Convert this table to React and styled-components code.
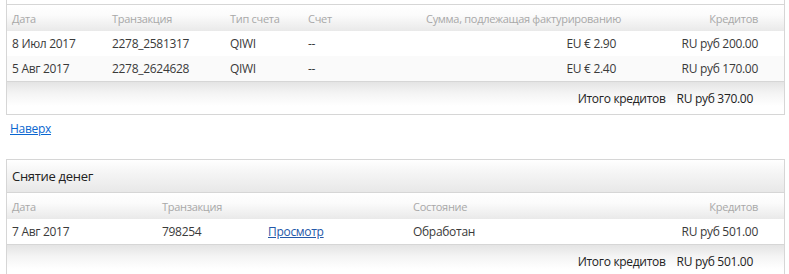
import styled, { createGlobalStyle } from 'styled-components';

const Global = createGlobalStyle`
  body {
    margin: 0;
    background: #fff;
    font-family: "Open Sans", "Noto Sans", sans-serif;
    color: #333;
    letter-spacing: -0.3px;
  }
`;

const Page = styled.div`
  padding: 0 4px 0 6px;
  display: flex;
  flex-direction: column;
`;

const Panel = styled.section`
  border: 1px solid #d6d6d6;
  border-top: ${p => (p.cut ? 'none' : '1px solid #d6d6d6')};
  background: #fff;
`;

const Cap = styled.div`
  height: 4px;
  border-bottom: 1px solid #d6d6d6;
`;

const Title = styled.div`
  height: 32px;
  display: flex;
  align-items: center;
  padding: 0 5px;
  font-size: 13px;
  color: #222;
  border-bottom: 1px solid #d6d6d6;
  background: linear-gradient(#fff 0%, #f6f6f6 35%, #e8e8e8 100%);
`;

const Grid = styled.div`
  display: grid;
  grid-template-columns: ${p => p.cols};
  align-items: center;
  height: ${p => p.h || 25}px;
`;

const HeadRow = styled(Grid)`
  font-size: 11px;
  color: #a8a8a8;
  background: linear-gradient(#fff 0%, #fbfbfb 40%, #e9e9e9 100%);
`;

const Row = styled(Grid)`
  font-size: 12px;
  color: #3a3a3a;
  background: ${p => (p.alt ? '#fafafa' : '#fff')};
  &:last-of-type {
    border-bottom: 1px solid #d6d6d6;
  }
`;

const Cell = styled.div`
  padding: 0 5px;
  white-space: nowrap;
  text-align: ${p => (p.right ? 'right' : 'left')};
  &:last-child {
    padding-right: 26px;
  }
`;

const Body = styled.div``;

const Foot = styled.div`
  height: 32px;
  display: flex;
  justify-content: flex-end;
  align-items: center;
  gap: 11px;
  padding-right: 31px;
  font-size: 12px;
  color: #222;
  background: linear-gradient(#e4e4e4 0%, #f4f4f4 35%, #fff 75%);
`;

const Link = styled.a`
  font-size: 12px;
  color: ${p => p.dark ? '#2458a8' : '#0a66d0'};
  text-decoration: underline;
  cursor: pointer;
`;

const TopLink = styled.div`
  padding: 4px 4px 0;
  height: 40px;
  line-height: 16px;
`;

const depositCols = '100px 118px 78px minmax(0, 1fr) 200px 163px';
const withdrawCols = '150px 106px 145px minmax(0, 1fr) 142px';

const deposits = [
  { date: '8 Июл 2017', id: '2278_2581317', type: 'QIWI', acc: '--', sum: 'EU € 2.90', credit: 'RU руб 200.00' },
  { date: '5 Авг 2017', id: '2278_2624628', type: 'QIWI', acc: '--', sum: 'EU € 2.40', credit: 'RU руб 170.00' },
];

export default function App() {
  return (
    <Page>
      <Global />
      <Panel cut>
        <Cap />
        <HeadRow cols={depositCols} h={26}>
          <Cell>Дата</Cell>
          <Cell>Транзакция</Cell>
          <Cell>Тип счета</Cell>
          <Cell>Счет</Cell>
          <Cell right>Сумма, подлежащая фактурированию</Cell>
          <Cell right>Кредитов</Cell>
        </HeadRow>
        <Body>
          {deposits.map((d, i) => (
            <Row key={d.id} cols={depositCols} alt={i % 2 === 1}>
              <Cell>{d.date}</Cell>
              <Cell>{d.id}</Cell>
              <Cell>{d.type}</Cell>
              <Cell>{d.acc}</Cell>
              <Cell right>{d.sum}</Cell>
              <Cell right>{d.credit}</Cell>
            </Row>
          ))}
        </Body>
        <Foot>
          <span>Итого кредитов</span>
          <span>RU руб 370.00</span>
        </Foot>
      </Panel>

      <TopLink>
        <Link href="#top">Наверх</Link>
      </TopLink>

      <Panel>
        <Title>Снятие денег</Title>
        <HeadRow cols={withdrawCols} h={26}>
          <Cell>Дата</Cell>
          <Cell>Транзакция</Cell>
          <Cell />
          <Cell>Состояние</Cell>
          <Cell right>Кредитов</Cell>
        </HeadRow>
        <Body>
          <Row cols={withdrawCols}>
            <Cell>7 Авг 2017</Cell>
            <Cell>798254</Cell>
            <Cell><Link dark>Просмотр</Link></Cell>
            <Cell>Обработан</Cell>
            <Cell right>RU руб 501.00</Cell>
          </Row>
        </Body>
        <Foot>
          <span>Итого кредитов</span>
          <span>RU руб 501.00</span>
        </Foot>
      </Panel>
    </Page>
  );
}
